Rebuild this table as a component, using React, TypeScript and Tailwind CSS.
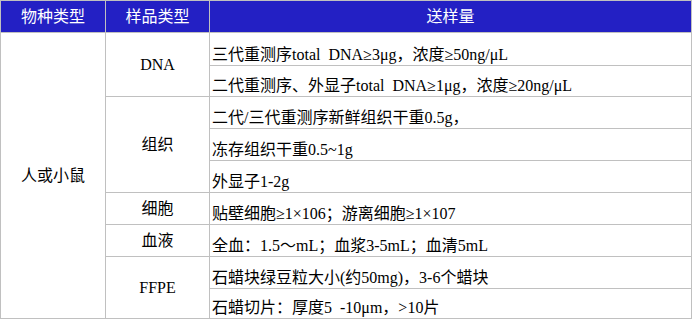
const font = "font-['Liberation_Serif','Noto_Sans_CJK_SC',serif]";

const rows: { h: string; text: string }[] = [
  { h: "h-[33px]", text: "三代重测序total  DNA≥3μg，浓度≥50ng/μL" },
  { h: "h-[31px]", text: "二代重测序、外显子total  DNA≥1μg，浓度≥20ng/μL" },
  { h: "h-[32px]", text: "二代/三代重测序新鲜组织干重0.5g，" },
  { h: "h-[32px]", text: "冻存组织干重0.5~1g" },
  { h: "h-[32px]", text: "外显子1-2g" },
  { h: "h-[32px]", text: "贴壁细胞≥1×106；游离细胞≥1×107" },
  { h: "h-[32px]", text: "全血：1.5～mL；血浆3-5mL；血清5mL" },
  { h: "h-[32px]", text: "石蜡块绿豆粒大小(约50mg)，3-6个蜡块" },
  { h: "h-[30px]", text: "石蜡切片：厚度5  -10μm，>10片" },
];

// sample type cells, keyed by the row they start on
const types: Record<number, { label: string; span: number }> = {
  0: { label: "DNA", span: 2 },
  2: { label: "组织", span: 3 },
  5: { label: "细胞", span: 1 },
  6: { label: "血液", span: 1 },
  7: { label: "FFPE", span: 2 },
};

export default function App() {
  return (
    <div className="h-[321px] w-[692px] bg-white">
      <table
        className={`w-[692px] table-fixed border-collapse text-[16px] leading-[18px] text-black ${font}`}
      >
        <colgroup>
          <col className="w-[105px]" />
          <col className="w-[104px]" />
          <col />
        </colgroup>
        <thead>
          <tr className="h-[32px] bg-[#2320c4] text-white">
            <th className="border border-[#c0c0c0] p-0 font-normal">物种类型</th>
            <th className="border border-[#c0c0c0] p-0 font-normal">样品类型</th>
            <th className="border border-[#c0c0c0] p-0 font-normal">送样量</th>
          </tr>
        </thead>
        <tbody>
          {rows.map((r, i) => (
            <tr key={i} className={r.h}>
              {i === 0 && (
                <td
                  rowSpan={rows.length}
                  className="border border-[#c0c0c0] p-0 text-center align-middle"
                >
                  人或小鼠
                </td>
              )}
              {types[i] && (
                <td
                  rowSpan={types[i].span}
                  className="border border-[#c0c0c0] p-0 text-center align-middle"
                >
                  {types[i].label}
                </td>
              )}
              <td className="whitespace-pre border border-[#c0c0c0] pb-[1px] pl-[2px] pr-0 pt-0 align-bottom">
                {r.text}
              </td>
            </tr>
          ))}
        </tbody>
      </table>
    </div>
  );
}
